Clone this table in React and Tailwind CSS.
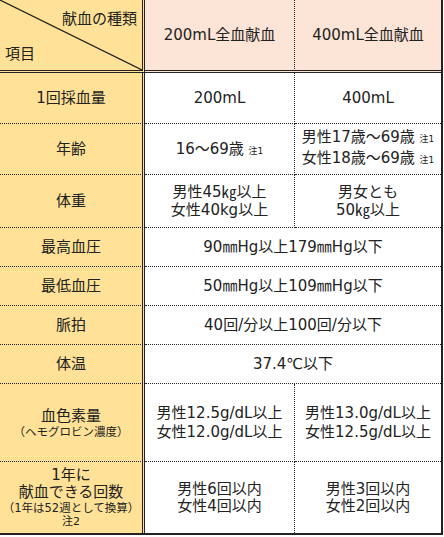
import React from 'react';

const font = { fontFamily: '"DejaVu Sans", "Noto Sans CJK JP", sans-serif' };

function Label({ h, children, last }) {
    return (
        <div className={`w-[145px] shrink-0 bg-[#FFE197] border-r-[3px] border-double border-[#222] flex flex-col items-center justify-center text-center ${last ? '' : 'border-b [border-bottom-style:dotted]'} ${h}`}>
            {children}
        </div>
    );
}

function Cell({ className = '', children }) {
    return (
        <div className={`flex flex-col items-center justify-center text-center whitespace-nowrap ${className}`}>
            {children}
        </div>
    );
}

export default function App() {
    const dot = 'border-b border-dotted border-[#222]';

    return (
        <div className="bg-white w-[444px] h-[537px]" style={font}>
            <div className="w-[443px] border-r-2 border-b-2 border-[#222] text-[15px] text-[#222]">

                {/* Header */}
                <div className="flex h-[73px]">
                    <div className="relative w-[145px] shrink-0 bg-[#FFE197] border-r-[3px] border-b-[3px] border-double border-[#222] flex flex-col justify-between">
                        <svg className="absolute inset-0 w-full h-full" viewBox="0 0 142 70" preserveAspectRatio="none">
                            <line x1="0" y1="0" x2="142" y2="70" stroke="#222" strokeWidth="1.2" />
                        </svg>
                        <span className="self-end pr-[5px] pt-[10px] leading-[18px]">献血の種類</span>
                        <span className="self-start pl-[5px] pb-[7px] leading-[18px]">項目</span>
                    </div>
                    <Cell className="w-[150px] bg-[#FCE4D6] border-r border-b-[3px] border-double border-[#222] [border-right-style:dotted]">200mL全血献血</Cell>
                    <Cell className="flex-1 bg-[#FCE4D6] border-b-[3px] border-double border-[#222]">400mL全血献血</Cell>
                </div>

                <div className="flex">
                    <Label h="h-[51px]">1回採血量</Label>
                    <Cell className={`w-[150px] border-r ${dot}`}>200mL</Cell>
                    <Cell className={`flex-1 ${dot}`}>400mL</Cell>
                </div>

                <div className="flex">
                    <Label h="h-[51px]">年齢</Label>
                    <Cell className={`w-[150px] border-r ${dot}`}>
                        <span>16〜69歳 <span className="text-[9px]">注1</span></span>
                    </Cell>
                    <Cell className={`flex-1 leading-[19px] ${dot}`}>
                        <span>男性17歳〜69歳 <span className="text-[9px]">注1</span></span>
                        <span>女性18歳〜69歳 <span className="text-[9px]">注1</span></span>
                    </Cell>
                </div>

                <div className="flex">
                    <Label h="h-[53px]">体重</Label>
                    <Cell className={`w-[150px] border-r leading-[18px] ${dot}`}>
                        <span>男性45㎏以上</span>
                        <span>女性40kg以上</span>
                    </Cell>
                    <Cell className={`flex-1 leading-[18px] ${dot}`}>
                        <span>男女とも</span>
                        <span>50㎏以上</span>
                    </Cell>
                </div>

                <div className="flex">
                    <Label h="h-[39px]">最高血圧</Label>
                    <Cell className={`flex-1 ${dot}`}>90㎜Hg以上179㎜Hg以下</Cell>
                </div>

                <div className="flex">
                    <Label h="h-[39px]">最低血圧</Label>
                    <Cell className={`flex-1 ${dot}`}>50㎜Hg以上109㎜Hg以下</Cell>
                </div>

                <div className="flex">
                    <Label h="h-[39px]">脈拍</Label>
                    <Cell className={`flex-1 ${dot}`}>40回/分以上100回/分以下</Cell>
                </div>

                <div className="flex">
                    <Label h="h-[39px]">体温</Label>
                    <Cell className={`flex-1 ${dot}`}>37.4℃以下</Cell>
                </div>

                <div className="flex">
                    <Label h="h-[78px]">
                        <span className="leading-[18px]">血色素量</span>
                        <span className="text-[11.5px] leading-[14px]">（ヘモグロビン濃度）</span>
                    </Label>
                    <Cell className={`w-[150px] border-r leading-[19px] ${dot}`}>
                        <span>男性12.5g/dL以上</span>
                        <span>女性12.0g/dL以上</span>
                    </Cell>
                    <Cell className={`flex-1 leading-[19px] ${dot}`}>
                        <span>男性13.0g/dL以上</span>
                        <span>女性12.5g/dL以上</span>
                    </Cell>
                </div>

                <div className="flex">
                    <Label h="h-[71px]" last>
                        <span className="leading-[17px]">1年に</span>
                        <span className="leading-[17px]">献血できる回数</span>
                        <span className="text-[11.5px] leading-[14px]">（1年は52週として換算）</span>
                        <span className="text-[11px] leading-[14px]">注2</span>
                    </Label>
                    <Cell className="w-[150px] border-r border-dotted border-[#222] leading-[17px]">
                        <span>男性6回以内</span>
                        <span>女性4回以内</span>
                    </Cell>
                    <Cell className="flex-1 leading-[17px]">
                        <span>男性3回以内</span>
                        <span>女性2回以内</span>
                    </Cell>
                </div>
            </div>
        </div>
    );
}
